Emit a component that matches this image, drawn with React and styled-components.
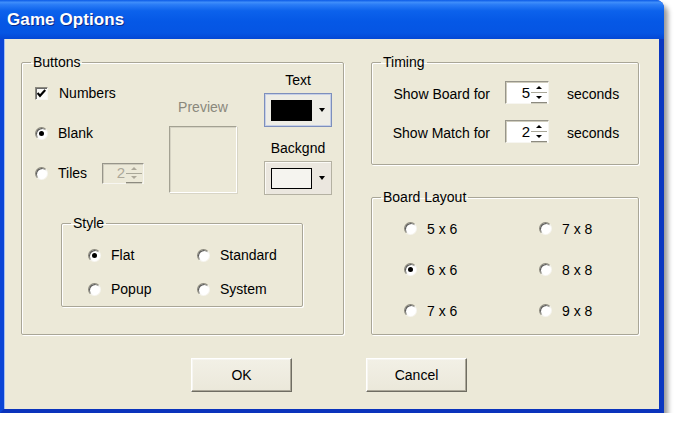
import React from 'react';
import styled, { createGlobalStyle } from 'styled-components';

const Global = createGlobalStyle`
  html, body { margin: 0; padding: 0; background: #ffffff; }
  body {
    font-family: "Liberation Sans", Arial, sans-serif;
    font-size: 14px;
    color: #000;
  }
  * { box-sizing: border-box; }
`;

const Window = styled.div`
  width: 664px;
  display: flex;
  flex-direction: column;
  border-radius: 0 8px 0 0;
  background: #0a3fcf;
  box-shadow: 4px 5px 5px rgba(0, 0, 0, 0.4);
`;

const TitleBar = styled.div`
  height: 39px;
  display: flex;
  align-items: center;
  padding-left: 7px;
  border-radius: 0 8px 0 0;
  background: linear-gradient(
    to bottom,
    #0b5ae6 0%,
    #3f8efa 6%,
    #2a7cf6 12%,
    #0c62ec 28%,
    #0558e6 55%,
    #0555e3 85%,
    #0447d4 100%
  );
`;

const Title = styled.span`
  font-family: "Liberation Sans", Arial, sans-serif;
  font-weight: bold;
  font-size: 17px;
  color: #ffffff;
  text-shadow: 1px 1px 0 #0a2a8a;
  letter-spacing: 0.1px;
`;

const Frame = styled.div`
  border-left: 4px solid #0b45d6;
  border-right: 5px solid #0a36c0;
  border-bottom: 4px solid #0a33bc;
`;

const Client = styled.div`
  height: 370px;
  background: #ece9d8;
  box-shadow: inset 1px 0 0 #9fbdf3;
  display: flex;
  flex-direction: column;
  padding: 15px 20px 0 17px;
`;

const Panels = styled.div`
  display: flex;
  gap: 27px;
  height: 281px;
`;

const Group = styled.fieldset`
  margin: 0;
  padding: 0;
  min-width: 0;
  width: ${(p) => p.$w}px;
  height: ${(p) => p.$h}px;
  flex: none;
  border: 1px solid #a9a697;
  border-radius: 2px;
  box-shadow: 1px 1px 0 #ffffff, inset 1px 1px 0 #ffffff;
`;

const Legend = styled.legend`
  margin-left: 9px;
  padding: 0 2px;
  line-height: 16px;
  font-size: 14px;
`;

const RightColumn = styled.div`
  display: flex;
  flex-direction: column;
  gap: 24px;
`;

/* Buttons group */
const ButtonsTop = styled.div`
  display: flex;
  padding-left: 13px;
`;

const OptionsCol = styled.div`
  width: 134px;
  padding-top: 3px;
  display: flex;
  flex-direction: column;
`;

const OptionRow = styled.div`
  height: ${(p) => p.$h || 40}px;
  display: flex;
  align-items: center;
  gap: 10px;
  white-space: nowrap;
`;

const CheckBox = styled.span`
  width: 13px;
  height: 13px;
  flex: none;
  margin-right: 1px;
  border: 1px solid;
  border-color: #8b897e #f7f6f1 #f7f6f1 #8b897e;
  box-shadow: inset 1px 1px 0 #6a6a6a;
  background: #fbfbf8;
  display: flex;
  align-items: center;
  justify-content: center;
`;

const Radio = styled.span`
  width: 13px;
  height: 13px;
  flex: none;
  border-radius: 50%;
  border: 1px solid;
  border-color: #8b897d #f7f6f1 #f7f6f1 #8b897d;
  box-shadow: inset 1px 1px 0 #5a5a5a;
  background: radial-gradient(circle at 62% 62%, #ffffff 0%, #ffffff 50%, #e2e0d3 100%);
  display: flex;
  align-items: center;
  justify-content: center;
  &::after {
    content: '';
    width: 5px;
    height: 5px;
    border-radius: 50%;
    background: ${(p) => (p.$checked ? '#000' : 'transparent')};
  }
`;

const PreviewCol = styled.div`
  width: 68px;
  padding-top: 29px;
  display: flex;
  flex-direction: column;
  align-items: center;
`;

const PreviewLabel = styled.span`
  line-height: 16px;
  color: #8a887c;
`;

const PreviewBox = styled.div`
  margin-top: 11px;
  width: 68px;
  height: 67px;
  border: 1px solid;
  border-color: #a3a192 #ffffff #ffffff #a3a192;
  box-shadow: inset 1px 1px 0 #d6d3c4, 1px 1px 0 #d8d5c6;
`;

const ColorCol = styled.div`
  margin-left: 27px;
  width: 68px;
  padding-top: 2px;
  display: flex;
  flex-direction: column;
  align-items: center;
`;

const ColorLabel = styled.span`
  line-height: 16px;
  margin-top: ${(p) => (p.$spaced ? 13 : 0)}px;
`;

const ColorButton = styled.div`
  margin-top: 5px;
  width: 68px;
  height: 34px;
  display: flex;
  align-items: center;
  padding-left: 6px;
  border: 1px solid ${(p) => (p.$focused ? '#7d8fbd' : '#b4b1a2')};
  box-shadow: ${(p) =>
    p.$focused ? 'inset 0 0 0 1px #c6cfe6' : 'inset 1px 1px 0 #fbfaf6'};
  background: ${(p) => (p.$focused ? '#eeede6' : '#ebe7df')};
`;

const Swatch = styled.span`
  width: 41px;
  height: 21px;
  flex: none;
  background: ${(p) => p.$color};
  border: ${(p) => (p.$outlined ? '1px solid #000' : 'none')};
`;

const DropArrow = styled.span`
  margin-left: 7px;
  width: 0;
  height: 0;
  border-left: 3px solid transparent;
  border-right: 3px solid transparent;
  border-top: 4px solid #000;
`;

const StyleGroup = styled(Group)`
  margin: 20px 0 0 39px;
`;

const RadioGrid = styled.div`
  display: grid;
  grid-template-columns: ${(p) => p.$col}px auto;
  grid-auto-rows: ${(p) => p.$row}px;
  padding: ${(p) => p.$top}px 0 0 ${(p) => p.$left}px;
`;

/* Spinner */
const SpinBox = styled.div`
  width: ${(p) => p.$w}px;
  height: ${(p) => p.$h}px;
  flex: none;
  display: flex;
  border: 1px solid;
  border-color: #97958a #f7f6f1 #f7f6f1 #97958a;
  box-shadow: inset 1px 1px 0 #cfccbd;
  background: ${(p) => (p.$disabled ? '#ece9d8' : '#ffffff')};
  margin-left: ${(p) => p.$ml || 0}px;
`;

const SpinValue = styled.span`
  flex: 1;
  text-align: right;
  padding-right: 1px;
  align-self: center;
  line-height: 16px;
  font-size: 15px;
  color: ${(p) => (p.$disabled ? '#aca899' : '#000')};
`;

const SpinButtons = styled.div`
  width: 17px;
  display: flex;
  flex-direction: column;
  padding: 1px 1px 0 0;
`;

const SpinHalf = styled.div`
  flex: 1;
  display: flex;
  align-items: center;
  justify-content: center;
  border-bottom: 1px solid ${(p) => (p.$bottom ? '#8c8a7f' : '#a9a798')};
  box-shadow: ${(p) => (p.$bottom ? '0 1px 0 #d0cebf' : 'none')};
`;

const SpinArrow = styled.span`
  width: 0;
  height: 0;
  border-left: 3px solid transparent;
  border-right: 3px solid transparent;
  ${(p) => (p.$up ? 'border-bottom' : 'border-top')}: 3px solid
    ${(p) => (p.$disabled ? '#aca899' : '#000')};
`;

function Spinner({ value, w, h, disabled, ml }) {
  return (
    <SpinBox $w={w} $h={h} $disabled={disabled} $ml={ml}>
      <SpinValue $disabled={disabled}>{value}</SpinValue>
      <SpinButtons>
        <SpinHalf>
          <SpinArrow $up $disabled={disabled} />
        </SpinHalf>
        <SpinHalf $bottom>
          <SpinArrow $disabled={disabled} />
        </SpinHalf>
      </SpinButtons>
    </SpinBox>
  );
}

/* Timing */
const TimingGrid = styled.div`
  display: grid;
  grid-template-columns: 118px 44px auto;
  grid-auto-rows: 23px;
  column-gap: 15px;
  row-gap: 16px;
  padding-top: 11px;
  align-items: center;
`;

const TimingLabel = styled.span`
  text-align: right;
  white-space: nowrap;
  line-height: 16px;
  padding-top: 2px;
`;

const Seconds = styled.span`
  margin-left: 3px;
  line-height: 16px;
  padding-top: 2px;
`;

/* Bottom buttons */
const ButtonRow = styled.div`
  margin-top: 23px;
  display: flex;
  justify-content: center;
  gap: 74px;
  padding-right: 2px;
`;

const PushButton = styled.div`
  width: 101px;
  height: 34px;
  display: flex;
  align-items: center;
  justify-content: center;
  border: 1px solid;
  border-color: #ffffff #6f6d62 #6f6d62 #ffffff;
  box-shadow: inset -1px -1px 0 #aca899, inset 1px 1px 0 #f7f6f1;
  background: linear-gradient(to bottom, #f2f0e6, #ebe8da);
`;

function Check() {
  return (
    <svg width="9" height="9" viewBox="0 0 9 9">
      <path d="M0.5 4 L3 6.8 L8.3 1" fill="none" stroke="#000" strokeWidth="2.2" />
    </svg>
  );
}

const layouts = [
  ['5 x 6', false],
  ['7 x 8', false],
  ['6 x 6', true],
  ['8 x 8', false],
  ['7 x 6', false],
  ['9 x 8', false],
];

const styles = [
  ['Flat', true],
  ['Standard', false],
  ['Popup', false],
  ['System', false],
];

export default function App() {
  return (
    <>
      <Global />
      <Window>
        <TitleBar>
          <Title>Game Options</Title>
        </TitleBar>
        <Frame>
          <Client>
            <Panels>
              <Group $w={323} $h={281}>
                <Legend>Buttons</Legend>
                <ButtonsTop>
                  <OptionsCol>
                    <OptionRow>
                      <CheckBox>
                        <Check />
                      </CheckBox>
                      <span>Numbers</span>
                    </OptionRow>
                    <OptionRow>
                      <Radio $checked />
                      <span>Blank</span>
                    </OptionRow>
                    <OptionRow>
                      <Radio />
                      <span>Tiles</span>
                      <Spinner value="2" w={42} h={21} disabled ml={5} />
                    </OptionRow>
                  </OptionsCol>
                  <PreviewCol>
                    <PreviewLabel>Preview</PreviewLabel>
                    <PreviewBox />
                  </PreviewCol>
                  <ColorCol>
                    <ColorLabel>Text</ColorLabel>
                    <ColorButton $focused>
                      <Swatch $color="#000000" />
                      <DropArrow />
                    </ColorButton>
                    <ColorLabel $spaced>Backgnd</ColorLabel>
                    <ColorButton>
                      <Swatch $color="#f5f4ef" $outlined />
                      <DropArrow />
                    </ColorButton>
                  </ColorCol>
                </ButtonsTop>
                <StyleGroup $w={242} $h={92}>
                  <Legend>Style</Legend>
                  <RadioGrid $col={109} $row={34} $top={7} $left={26}>
                    {styles.map(([label, checked]) => (
                      <OptionRow key={label} $h={34}>
                        <Radio $checked={checked} />
                        <span>{label}</span>
                      </OptionRow>
                    ))}
                  </RadioGrid>
                </StyleGroup>
              </Group>
              <RightColumn>
                <Group $w={268} $h={111}>
                  <Legend>Timing</Legend>
                  <TimingGrid>
                    <TimingLabel>Show Board for</TimingLabel>
                    <Spinner value="5" w={44} h={23} />
                    <Seconds>seconds</Seconds>
                    <TimingLabel>Show Match for</TimingLabel>
                    <Spinner value="2" w={44} h={23} />
                    <Seconds>seconds</Seconds>
                  </TimingGrid>
                </Group>
                <Group $w={268} $h={146}>
                  <Legend>Board Layout</Legend>
                  <RadioGrid $col={135} $row={41} $top={3} $left={32}>
                    {layouts.map(([label, checked]) => (
                      <OptionRow key={label} $h={41}>
                        <Radio $checked={checked} />
                        <span>{label}</span>
                      </OptionRow>
                    ))}
                  </RadioGrid>
                </Group>
              </RightColumn>
            </Panels>
            <ButtonRow>
              <PushButton>OK</PushButton>
              <PushButton>Cancel</PushButton>
            </ButtonRow>
          </Client>
        </Frame>
      </Window>
    </>
  );
}
